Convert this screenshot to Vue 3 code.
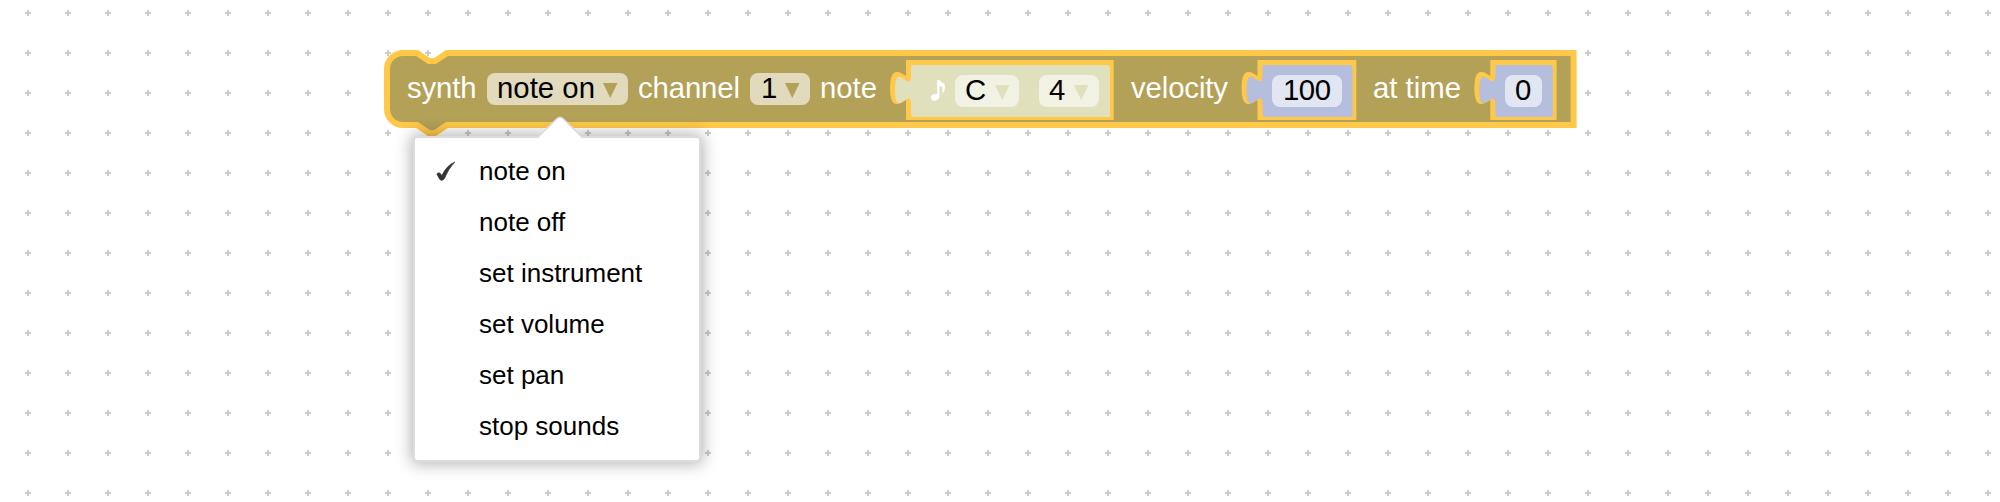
<script setup>
const family = 'Liberation Sans, Arial, sans-serif'
const tab = 'c0,20 -16,-16 -16,15 s16,-5 16,15'
const labels = [
  { t: 'synth', x: 407, w: 69.5 },
  { t: 'channel', x: 638, w: 102 },
  { t: 'note', x: 820, w: 57 },
  { t: 'velocity', x: 1131, w: 97 },
  { t: 'at time', x: 1373, w: 88 },
]
const fields = [
  { t: 'note on', x: 487, y: 73, w: 141, fill: '#e1dabd', tx: 497, tw: 98, arrow: 604, ac: '#b3a158' },
  { t: '1', x: 750, y: 73, w: 60, fill: '#e1dabd', tx: 761, arrow: 786, ac: '#b3a158' },
  { t: 'C', x: 955, y: 75, w: 64, fill: '#f2f2e4', tx: 965, arrow: 996, ac: '#e0e0bd' },
  { t: '4', x: 1039, y: 75, w: 60, fill: '#f2f2e4', tx: 1049, arrow: 1075, ac: '#e0e0bd' },
  { t: '100', x: 1272, y: 75, w: 70, fill: '#e2e6f2', tx: 1283, tw: 48 },
  { t: '0', x: 1505, y: 75, w: 37, fill: '#e2e6f2', tx: 1515 },
]
const values = [
  { x: 909, r: 1110.7, fill: '#e0e0bd' },
  { x: 1260.5, r: 1353.3, fill: '#b5bedd' },
  { x: 1493.3, r: 1553.6, fill: '#b5bedd' },
]
const options = ['note on', 'note off', 'set instrument', 'set volume', 'set pan', 'stop sounds']
</script>

<template>
  <main class="workspace">
    <svg class="canvas" width="2000" height="502" :font-family="family">
      <defs>
        <pattern id="grid" x="8" y="33" width="40" height="40" patternUnits="userSpaceOnUse">
          <path d="M17,20h6M20,17v6" stroke="#ccc" stroke-width="2" />
        </pattern>
      </defs>
      <rect width="2000" height="502" fill="url(#grid)" />
      <path
        d="M387,69a16,16 0 0 1 16,-16H417l12,8h6l12,-8H1573.6V125H447l-12,8h-6l-12,-8H403a16,16 0 0 1 -16,-16z"
        fill="#b3a158" stroke="#ffc849" stroke-width="6"
      />
      <g v-for="v in values" :key="v.x">
        <path :d="`M${v.x},63V73${tab}V117H${v.r}V63z`" fill="none" stroke="#ffc849" stroke-width="6" />
        <path :d="`M${v.x + 2},65V75${tab}V115l2,2H${v.r - 0.7}V67l-2,-2z`" :fill="v.fill" />
      </g>
      <text v-for="l in labels" :key="l.t" :x="l.x" y="98" :textLength="l.w" font-size="29.33" fill="#fff">{{ l.t }}</text>
      <g v-for="f in fields" :key="f.t">
        <rect :x="f.x" :y="f.y" :width="f.w" height="32" rx="8" :fill="f.fill" />
        <text :x="f.tx" :y="f.y + 25" :textLength="f.tw" font-size="29.33">{{ f.t }}</text>
        <path v-if="f.arrow" :d="`M${f.arrow - 1},${f.y + 10}h14.5l-7.25,15z`" :fill="f.ac" />
      </g>
      <g fill="#fff">
        <ellipse cx="935" cy="97.2" rx="4.2" ry="3.3" transform="rotate(-15 935 97.2)" />
        <path d="M937.2,80h2.2c.5,2.5 5.6,2 5.6,6.5q0,3 -1.6,6h-1.2c1,-4.500 .5,-6 -2.800,-6.500V97.500h-2.200z" />
      </g>
    </svg>
    <section class="menu">
      <svg class="pointer" width="50" height="24" viewBox="0 0 50 24">
        <path d="M2,23L21,3.5Q25,-1 29,3.5L48,23V24H2z" fill="#fff" />
        <path d="M2,22L21,3.5Q25,-1 29,3.5L48,22" fill="none" stroke="#dadce0" stroke-width="1.5" />
      </svg>
      <ul>
        <li v-for="(o, i) in options" :key="o">
          <svg v-if="i === 0" class="check" width="20" height="21" viewBox="0 0 20 21">
            <path d="M.8,13q2.800,-3 5,1.500Q11,4 18.800,1Q12.500,7.500 8.500,17.500q-3,3.500 -5,.5z" fill="#333" stroke="#333" stroke-width=".6" />
          </svg>
          <span>{{ o }}</span>
        </li>
      </ul>
    </section>
  </main>
</template>

<style scoped>
.workspace { position: relative; width: 2000px; height: 502px; overflow: hidden; background: #fff; }
.canvas { display: block; }
.menu {
  position: absolute; left: 413px; top: 136px; box-sizing: border-box;
  width: 288px; height: 326px; padding: 10px 0; background: #fff;
  border: 2px solid #dadce0; border-radius: 4px; box-shadow: 0 0 16px 2px rgba(0, 0, 0, .3);
}
.pointer { position: absolute; left: 120px; top: -22px; }
ul { margin: 0; padding: 0; list-style: none; }
li {
  position: relative; height: 51px; padding-left: 64px; line-height: 47px;
  font-family: "Liberation Sans", Arial, sans-serif; font-size: 26px; color: #000;
}
.check { position: absolute; left: 21px; top: 13px; }
</style>
